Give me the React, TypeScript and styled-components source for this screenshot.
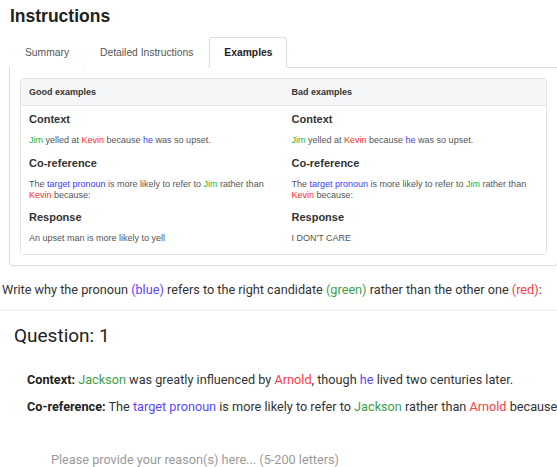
import React from "react";
import styled, { createGlobalStyle } from "styled-components";

const GlobalStyle = createGlobalStyle`
  html, body {
    margin: 0;
    padding: 0;
    background: #ffffff;
    overflow: hidden;
  }
  body {
    font-family: "Liberation Sans", Arial, sans-serif;
  }
`;

const Page = styled.div`
  width: 557px;
  height: 467px;
  overflow: hidden;
`;

const InstructionsSection = styled.section`
  padding: 6px 0 0 9px;
  width: 549px;
`;

const Title = styled.h2`
  margin: 0 0 11px 1px;
  font-size: 17.5px;
  line-height: 20px;
  font-weight: 700;
  color: #222;
`;

const TabBar = styled.div`
  display: flex;
  gap: 1px;
  padding-left: 1px;
  border-bottom: 1px solid #dddddd;
  height: 30px;
`;

const Tab = styled.div<{ $active?: boolean }>`
  display: flex;
  align-items: center;
  padding: 0 14px;
  font-size: 10.3px;
  font-weight: ${(p) => (p.$active ? 700 : 400)};
  color: ${(p) => (p.$active ? "#222" : "#555")};
  border: 1px solid ${(p) => (p.$active ? "#dddddd" : "transparent")};
  border-bottom-color: ${(p) => (p.$active ? "#ffffff" : "transparent")};
  border-radius: 3px 3px 0 0;
  background: #fff;
  margin-bottom: -1px;
  box-sizing: border-box;
  height: 31px;
`;

const TabPanel = styled.div`
  border: 1px solid #dddddd;
  border-top: none;
  border-radius: 0 0 4px 4px;
  padding: 10px;
`;

const ExampleTable = styled.div`
  border: 1px solid #e2e2e2;
  border-radius: 4px;
  overflow: hidden;
`;

const Row = styled.div<{ $head?: boolean }>`
  display: grid;
  grid-template-columns: 1fr 1fr;
  background: ${(p) => (p.$head ? "#f5f6f7" : "#fff")};
  border-bottom: ${(p) => (p.$head ? "1px solid #e6e6e6" : "none")};
`;

const HeadCell = styled.div`
  height: 26px;
  display: flex;
  align-items: center;
  padding: 0 8px;
  font-size: 9px;
  font-weight: 700;
  color: #333;
`;

const Cell = styled.div`
  padding: 6px 8px 0;
`;

const ExampleHeading = styled.h5`
  margin: 0 0 9px;
  font-size: 11px;
  line-height: 14px;
  font-weight: 700;
  color: #333;
`;

const ExampleText = styled.p`
  margin: 0 0 9.5px;
  font-size: 9px;
  line-height: 11px;
  color: #555;
`;

const Mark = styled.span<{ $c: "green" | "red" | "blue" }>`
  color: ${(p) =>
    p.$c === "green" ? "#22b33a" : p.$c === "red" ? "#ff2b2b" : "#3a3aff"};
`;

const Prompt = styled.p`
  margin: 15.5px 0 0 2px;
  font-family: Roboto, "Liberation Sans", sans-serif;
  font-size: 12.7px;
  line-height: 18px;
  color: #333;
  white-space: nowrap;
`;

const Tint = styled.span<{ $c: "green" | "red" | "blue" }>`
  color: ${(p) =>
    p.$c === "green" ? "#3c9f48" : p.$c === "red" ? "#ff3b45" : "#5b45ff"};
`;

const QuestionCard = styled.section`
  margin-top: 10px;
  border-top: 2px solid #f3f3f3;
  padding: 12px 0 0 14px;
  font-family: Roboto, "Liberation Sans", sans-serif;
  white-space: nowrap;
`;

const QuestionTitle = styled.h3`
  margin: 0;
  font-size: 19px;
  line-height: 26px;
  font-weight: 400;
  color: #222;
`;

const QuestionBody = styled.div`
  padding: 22px 0 0 13px;
  display: flex;
  flex-direction: column;
  gap: 9px;
`;

const QuestionLine = styled.p`
  margin: 0;
  font-size: 12.7px;
  line-height: 18px;
  color: #333;
`;

const Label = styled.strong`
  font-weight: 700;
  color: #222;
`;

const ReasonInput = styled.input`
  margin: 35px 0 0 37px;
  width: 480px;
  border: none;
  outline: none;
  padding: 0;
  font-family: Roboto, "Liberation Sans", sans-serif;
  font-size: 12.7px;
  line-height: 18px;
  color: #333;
  background: transparent;
  &::placeholder {
    color: #9a9a9a;
  }
`;

type Example = { title: string; response: string };

const examples: Example[] = [
  { title: "Good examples", response: "An upset man is more likely to yell" },
  { title: "Bad examples", response: "I DON'T CARE" },
];

export default function App() {
  return (
    <Page>
      <GlobalStyle />
      <InstructionsSection>
        <Title>Instructions</Title>
        <TabBar>
          <Tab>Summary</Tab>
          <Tab>Detailed Instructions</Tab>
          <Tab $active>Examples</Tab>
        </TabBar>
        <TabPanel>
          <ExampleTable>
            <Row $head>
              {examples.map((e) => (
                <HeadCell key={e.title}>{e.title}</HeadCell>
              ))}
            </Row>
            <Row>
              {examples.map((e) => (
                <Cell key={e.title}>
                  <ExampleHeading>Context</ExampleHeading>
                  <ExampleText>
                    <Mark $c="green">Jim</Mark> yelled at <Mark $c="red">Kevin</Mark> because{" "}
                    <Mark $c="blue">he</Mark> was so upset.
                  </ExampleText>
                  <ExampleHeading>Co-reference</ExampleHeading>
                  <ExampleText>
                    The <Mark $c="blue">target pronoun</Mark> is more likely to refer to{" "}
                    <Mark $c="green">Jim</Mark> rather than <Mark $c="red">Kevin</Mark> because:
                  </ExampleText>
                  <ExampleHeading>Response</ExampleHeading>
                  <ExampleText>{e.response}</ExampleText>
                </Cell>
              ))}
            </Row>
          </ExampleTable>
        </TabPanel>
      </InstructionsSection>

      <Prompt>
        Write why the pronoun <Tint $c="blue">(blue)</Tint> refers to the right candidate{" "}
        <Tint $c="green">(green)</Tint> rather than the other one <Tint $c="red">(red)</Tint>:
      </Prompt>

      <QuestionCard>
        <QuestionTitle>Question: 1</QuestionTitle>
        <QuestionBody>
          <QuestionLine>
            <Label>Context:</Label> <Tint $c="green">Jackson</Tint> was greatly influenced by{" "}
            <Tint $c="red">Arnold</Tint>, though <Tint $c="blue">he</Tint> lived two centuries later.
          </QuestionLine>
          <QuestionLine>
            <Label>Co-reference:</Label> The <Tint $c="blue">target pronoun</Tint> is more likely to
            refer to <Tint $c="green">Jackson</Tint> rather than <Tint $c="red">Arnold</Tint> because:
          </QuestionLine>
        </QuestionBody>
        <ReasonInput placeholder="Please provide your reason(s) here... (5-200 letters)" />
      </QuestionCard>
    </Page>
  );
}
